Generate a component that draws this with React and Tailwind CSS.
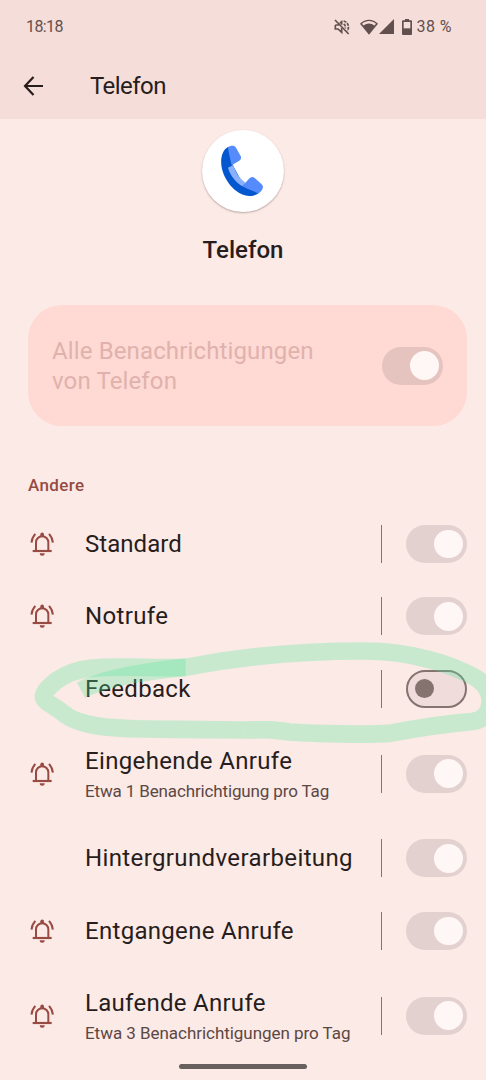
import React from "react";
import clsx from "clsx";

const channels = [
  { name: "Standard", icon: true, tracking: "tracking-[0.05px]" },
  { name: "Notrufe", icon: true, tracking: "tracking-[0.35px]" },
  { name: "Feedback", off: true, tracking: "tracking-[0.3px]" },
  {
    name: "Eingehende Anrufe",
    icon: true,
    note: "Etwa 1 Benachrichtigung pro Tag",
    tracking: "tracking-[0.35px]",
    noteTracking: "tracking-[-0.14px]",
  },
  { name: "Hintergrundverarbeitung", tracking: "tracking-[0.38px]" },
  { name: "Entgangene Anrufe", icon: true, tracking: "tracking-[0.3px]" },
  {
    name: "Laufende Anrufe",
    icon: true,
    note: "Etwa 3 Benachrichtigungen pro Tag",
    tracking: "tracking-[0.28px]",
    noteTracking: "tracking-[-0.04px]",
  },
];

function BellIcon() {
  return (
    <svg
      className="w-6 h-6"
      viewBox="0 0 72 72"
      fill="none"
      stroke="#984b43"
      strokeWidth="6"
    >
      <path d="M18 57V31a18.5 18.5 0 0 1 37 0v26" />
      <path d="M8 57h57" strokeWidth="6.5" />
      <path d="M31 14V7a5.5 5.5 0 0 1 11 0v7z" fill="#984b43" stroke="none" />
      <path d="M29 64h15a7.5 7.5 0 0 1-15 0z" fill="#984b43" stroke="none" />
      <path d="M4.500 32C5.500 20 9 13 16 5.500M68.500 32C67.500 20 64 13 57 5.500" />
    </svg>
  );
}

function PhoneLogo() {
  return (
    <svg className="w-[52px] h-[60px]" viewBox="0 0 156 180" fill="none">
      <path
        d="M37 17C16 28 12 58 18 84C28 124 62 164 101 165C112 165 120 162 128 157L118 138L82 130L50 72L48 40z"
        fill="#0457cf"
      />
      <path
        d="M36 80L52 72C58 94 70 113 89 125L79 136C60 124 44 106 36 80z"
        fill="#8ab0fb"
      />
      <path
        d="M36 18L44 15C51 13 56 14 60 20L74 45C77 51 75 55 70 59L47 73C42 52 38 36 36 18z"
        fill="#558bfb"
      />
      <path
        d="M79 136L99 113C105 107 111 107 117 112L137 130C142 135 142 140 138 146C135 151 132 154 127 157C110 150 95 144 79 136z"
        fill="#558bfb"
      />
    </svg>
  );
}

function Toggle({ off, dark }) {
  if (off) {
    return (
      <div className="flex items-center w-[61.5px] h-[38px] pl-[7.5px] rounded-full border-2 border-[#857370] bg-[#f0dcda]">
        <div className="w-[19px] h-[19px] rounded-full bg-[#857370]" />
      </div>
    );
  }
  return (
    <div
      className={clsx(
        "flex items-center justify-end w-[61.5px] h-[38px] pr-[4.5px] rounded-full",
        dark ? "bg-[#e5c3bf]" : "bg-[#e3d1cf]"
      )}
    >
      <div className="w-[28.5px] h-[28.5px] rounded-full bg-[#fff7f5]" />
    </div>
  );
}

function StatusIcons() {
  return (
    <div className="flex items-center">
      <svg className="w-4 h-4" viewBox="0 0 48 48" fill="none" stroke="#62504e">
        <path d="M3 3l41 42" strokeWidth="5" />
        <path
          d="M4 18h9l4-4M4 18v12h8l11 10V27M18 12l5-4v9"
          strokeWidth="5"
        />
        <path
          d="M29 15c5 3 6 8 5 13M29 6c14 4 18 18 11 30"
          strokeWidth="5"
          strokeDasharray="9 3"
        />
      </svg>
      <svg className="w-[18px] h-4 ml-[10px]" viewBox="0 0 54 48" fill="#62504e">
        <path d="M0 14C16-2 38-2 54 14L27 47z" />
        <path
          d="M6 14.500C19 3.500 35 3.500 48 14.500l-4.500 5C33 11 21 11 10.500 19.500z"
          fill="#f5ddd9"
        />
      </svg>
      <svg className="w-[15px] h-[15px] ml-px" viewBox="0 0 45 45">
        <path d="M45 0v45H0z" fill="#62504e" />
      </svg>
      <svg className="w-[10px] h-4 ml-2" viewBox="0 0 30 48">
        <path
          d="M9 0h12v4h6q3 0 3 3v38q0 3-3 3H3q-3 0-3-3V7q0-3 3-3h6z"
          fill="#62504e"
        />
        <path d="M5 9h20v19H5z" fill="#f5ddd9" />
      </svg>
      <span className="ml-[5px] text-base leading-5 tracking-[0.45px]">38 %</span>
    </div>
  );
}

function ChannelRow({ channel }) {
  const { name, note, icon, off, tracking, noteTracking } = channel;
  return (
    <div
      className={clsx(
        "flex items-center shrink-0 pl-[30px] pr-[19px]",
        note ? "h-[97px]" : "h-[72.5px]"
      )}
    >
      <div className="w-[55px]">{icon && <BellIcon />}</div>
      <div className="flex-1 whitespace-nowrap">
        <div className={clsx("text-2xl leading-[30px] text-[#271d1c]", tracking)}>
          {name}
        </div>
        {note && (
          <div
            className={clsx(
              "pt-1 text-[17px] leading-[22px] text-[#5b4744]",
              noteTracking
            )}
          >
            {note}
          </div>
        )}
      </div>
      <div className="w-px h-[38px] mr-6 bg-[#857370]" />
      <Toggle off={off} />
    </div>
  );
}

// hand-drawn marker around the feedback row, darker where the stroke crosses itself
function Marker() {
  return (
    <svg
      className="absolute left-0 top-[630px] w-full h-[130px] pointer-events-none"
      viewBox="0 0 1458 390"
      fill="none"
      stroke="#52e79d"
      strokeOpacity="0.3"
      strokeWidth="53"
      strokeLinejoin="round"
    >
      <path d="M243 181C310 145 430 125 555 112C720 80 900 63 1090 63C1240 63 1360 105 1430 145C1490 185 1480 265 1420 274C1320 283 1230 298 1170 310C1090 315 950 311 870 306C800 297 810 299 730 300" />
      <path d="M730 300C640 300 530 298 430 297C320 295 240 287 195 254C165 226 130 218 130 199C135 175 185 125 270 115C350 107 430 114 557 113" />
    </svg>
  );
}

export default function App() {
  return (
    <div className="relative flex flex-col w-full h-[1080px] overflow-hidden bg-[#fceae6] font-['Roboto','Noto_Sans',sans-serif]">
      <header className="h-[119px] shrink-0 bg-[#f5ddd9]">
        <div className="flex items-center justify-between h-[53px] pl-[26px] pr-[34px] text-[#62504e]">
          <span className="text-base leading-5 tracking-[-0.6px]">18:18</span>
          <StatusIcons />
        </div>
        <div className="flex items-center h-[66px] pl-[23px]">
          <svg
            className="w-5 h-5"
            viewBox="0 0 20 20"
            fill="none"
            stroke="#271d1c"
            strokeWidth="2.2"
          >
            <path d="M10.500 1L2 10l8.500 9M2 10h18" />
          </svg>
          <h1 className="ml-[47px] text-2xl leading-8 tracking-[-0.55px] text-[#271d1c]">
            Telefon
          </h1>
        </div>
      </header>

      <div className="flex flex-col items-center h-[186px] shrink-0 pt-[10.5px]">
        <div className="flex items-center justify-center w-[82px] h-[82px] pr-0.5 rounded-full bg-white shadow-[0_1px_2px_#b9a5a2]">
          <PhoneLogo />
        </div>
        <h2 className="mt-[22px] text-2xl leading-8 font-medium text-[#271d1c]">
          Telefon
        </h2>
      </div>

      <div className="flex items-center justify-between h-[121px] shrink-0 mr-[19px] ml-7 px-6 rounded-[34px] bg-[#ffd9d3]">
        <div className="text-2xl leading-[30px] tracking-[0.13px] text-[#dfb2ad]">
          Alle Benachrichtigungen
          <br />
          von Telefon
        </div>
        <Toggle dark />
      </div>

      <div className="h-[81.5px] shrink-0 pt-[47px] pl-7 text-[17px] leading-6 font-medium tracking-[0.35px] text-[#964b43]">
        Andere
      </div>

      <div className="flex flex-col">
        {channels.map((channel) => (
          <ChannelRow key={channel.name} channel={channel} />
        ))}
      </div>

      <Marker />
      <div className="absolute bottom-[11.5px] left-[179px] w-32 h-[5px] rounded-full bg-[#68605e]" />
    </div>
  );
}
